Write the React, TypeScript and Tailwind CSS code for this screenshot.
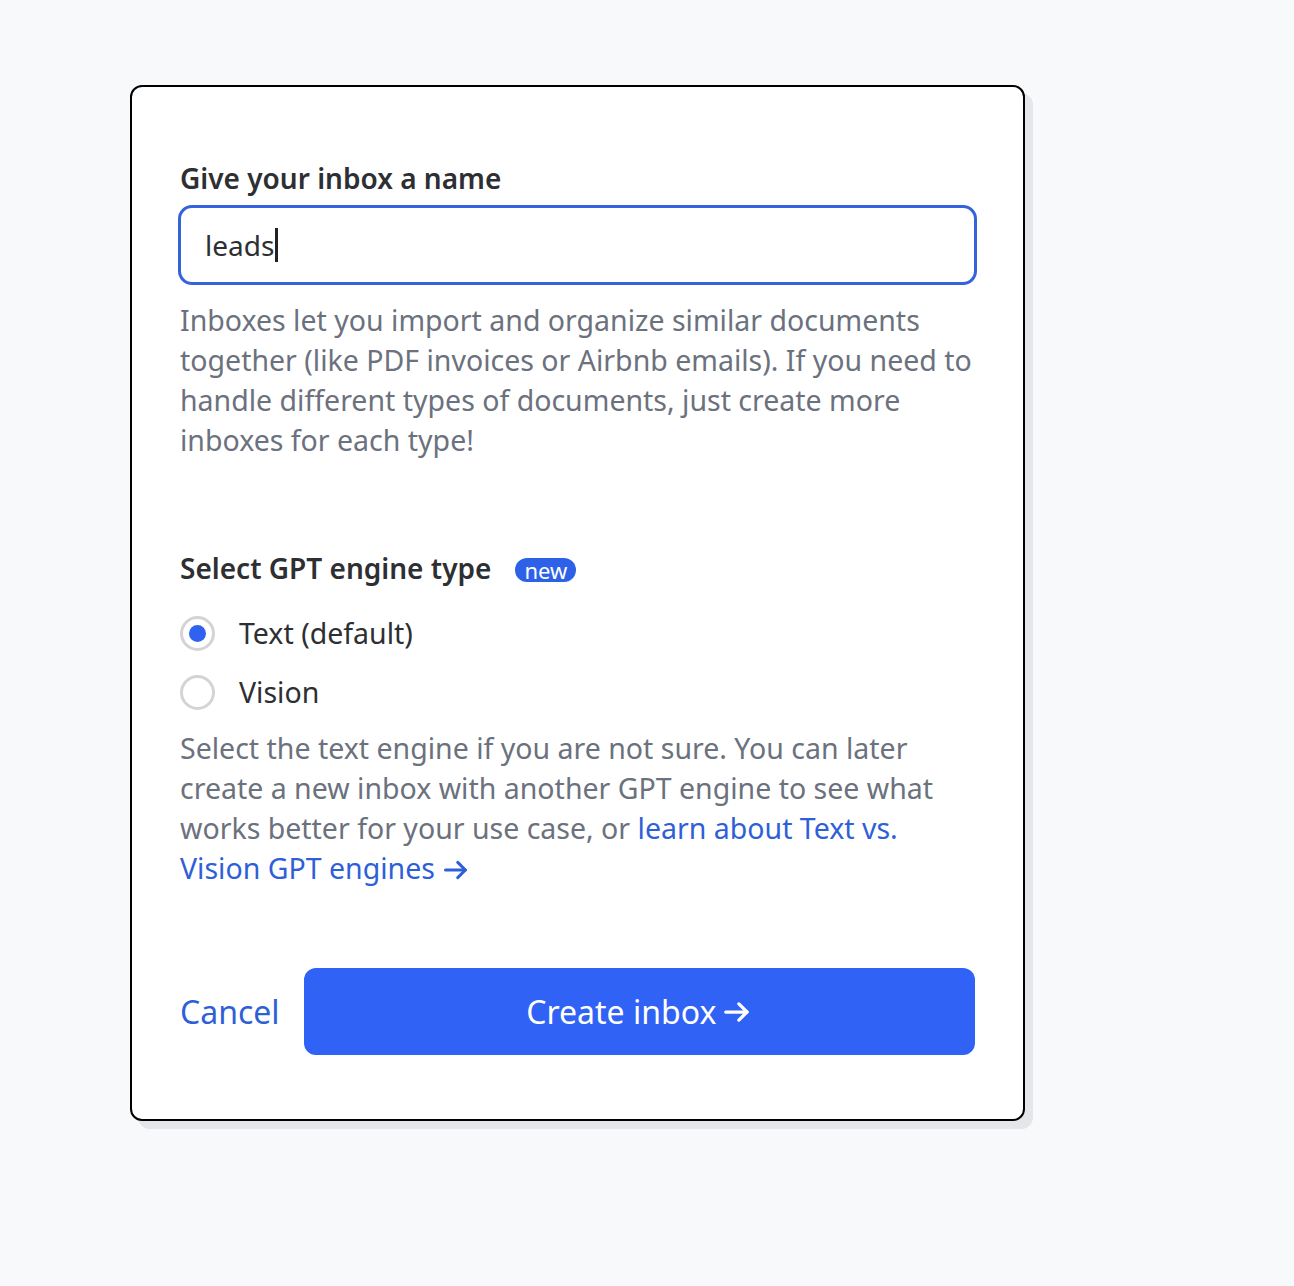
import React from "react";

function Arrow({ className }: { className?: string }) {
  return (
    <svg viewBox="0 0 24 24" className={className} fill="none" stroke="currentColor" strokeWidth={2.6} strokeLinecap="round" strokeLinejoin="round">
      <path d="M3 12h17" />
      <path d="M13.5 5.5 20 12l-6.5 6.5" />
    </svg>
  );
}

export default function App() {
  return (
    <div
      className="min-h-[1286px] w-full bg-[#f8f9fb] pt-[85px] pl-[130px]"
      style={{ fontFamily: '"Noto Sans", "Open Sans", sans-serif' }}
    >
      <div className="w-[895px] rounded-[12px] border-2 border-black bg-white px-[48px] pt-[74px] pb-[64px] shadow-[8px_8px_0_#e4e6ea]">
        <div className="text-[28px] font-semibold leading-[34px] text-[#2d2f33]">Give your inbox a name</div>
        <div className="mt-[10px] -mx-[2px] flex h-[80px] items-center rounded-[14px] border-[3px] border-[#3563dc] px-[24px]">
          <span className="text-[28px] text-[#2d2f33]">leads</span>
          <span className="ml-[1px] inline-block h-[34px] w-[3px] bg-[#222]" />
        </div>
        <p className="mt-[15px] text-[28.5px] leading-[40px] text-[#6b717d]">
          Inboxes let you import and organize similar documents together (like PDF invoices or Airbnb emails). If you need to handle different types of documents, just create more inboxes for each type!
        </p>
        <div className="mt-[91px] flex items-center gap-[24px]">
          <div className="text-[28px] font-semibold leading-[34px] text-[#2d2f33]">Select GPT engine type</div>
          <span className="mt-[3px] rounded-full bg-[#2d62e8] px-[9px] text-[22px] leading-[24px] text-white">new</span>
        </div>
        <div className="mt-[30px] flex items-center gap-[24px]">
          <span className="flex h-[35px] w-[35px] items-center justify-center rounded-full border-[3px] border-[#d4d4d6]">
            <span className="h-[17px] w-[17px] rounded-full bg-[#2f63ef]" />
          </span>
          <span className="text-[28.5px] leading-[36px] text-[#2d2f33]">Text (default)</span>
        </div>
        <div className="mt-[23px] flex items-center gap-[24px]">
          <span className="h-[35px] w-[35px] rounded-full border-[3px] border-[#d4d4d6]" />
          <span className="text-[28.5px] leading-[36px] text-[#2d2f33]">Vision</span>
        </div>
        <p className="mt-[18px] text-[28.5px] leading-[40px] text-[#6b717d]">
          Select the text engine if you are not sure. You can later create a new inbox with another GPT engine to see what works better for your use case, or{" "}
          <span className="text-[#2f5fd8]">
            learn about Text vs. Vision GPT engines <Arrow className="inline-block h-[28px] w-[28px] align-[-5px]" />
          </span>
        </p>
        <div className="mt-[80px] flex items-center gap-[24px]">
          <span className="text-[32px] text-[#2f5fd8]">Cancel</span>
          <button className="flex h-[87px] flex-1 items-center justify-center gap-[6px] rounded-[12px] bg-[#2f62f5] text-[32px] text-white">
            Create inbox
            <Arrow className="h-[30px] w-[30px]" />
          </button>
        </div>
      </div>
    </div>
  );
}
